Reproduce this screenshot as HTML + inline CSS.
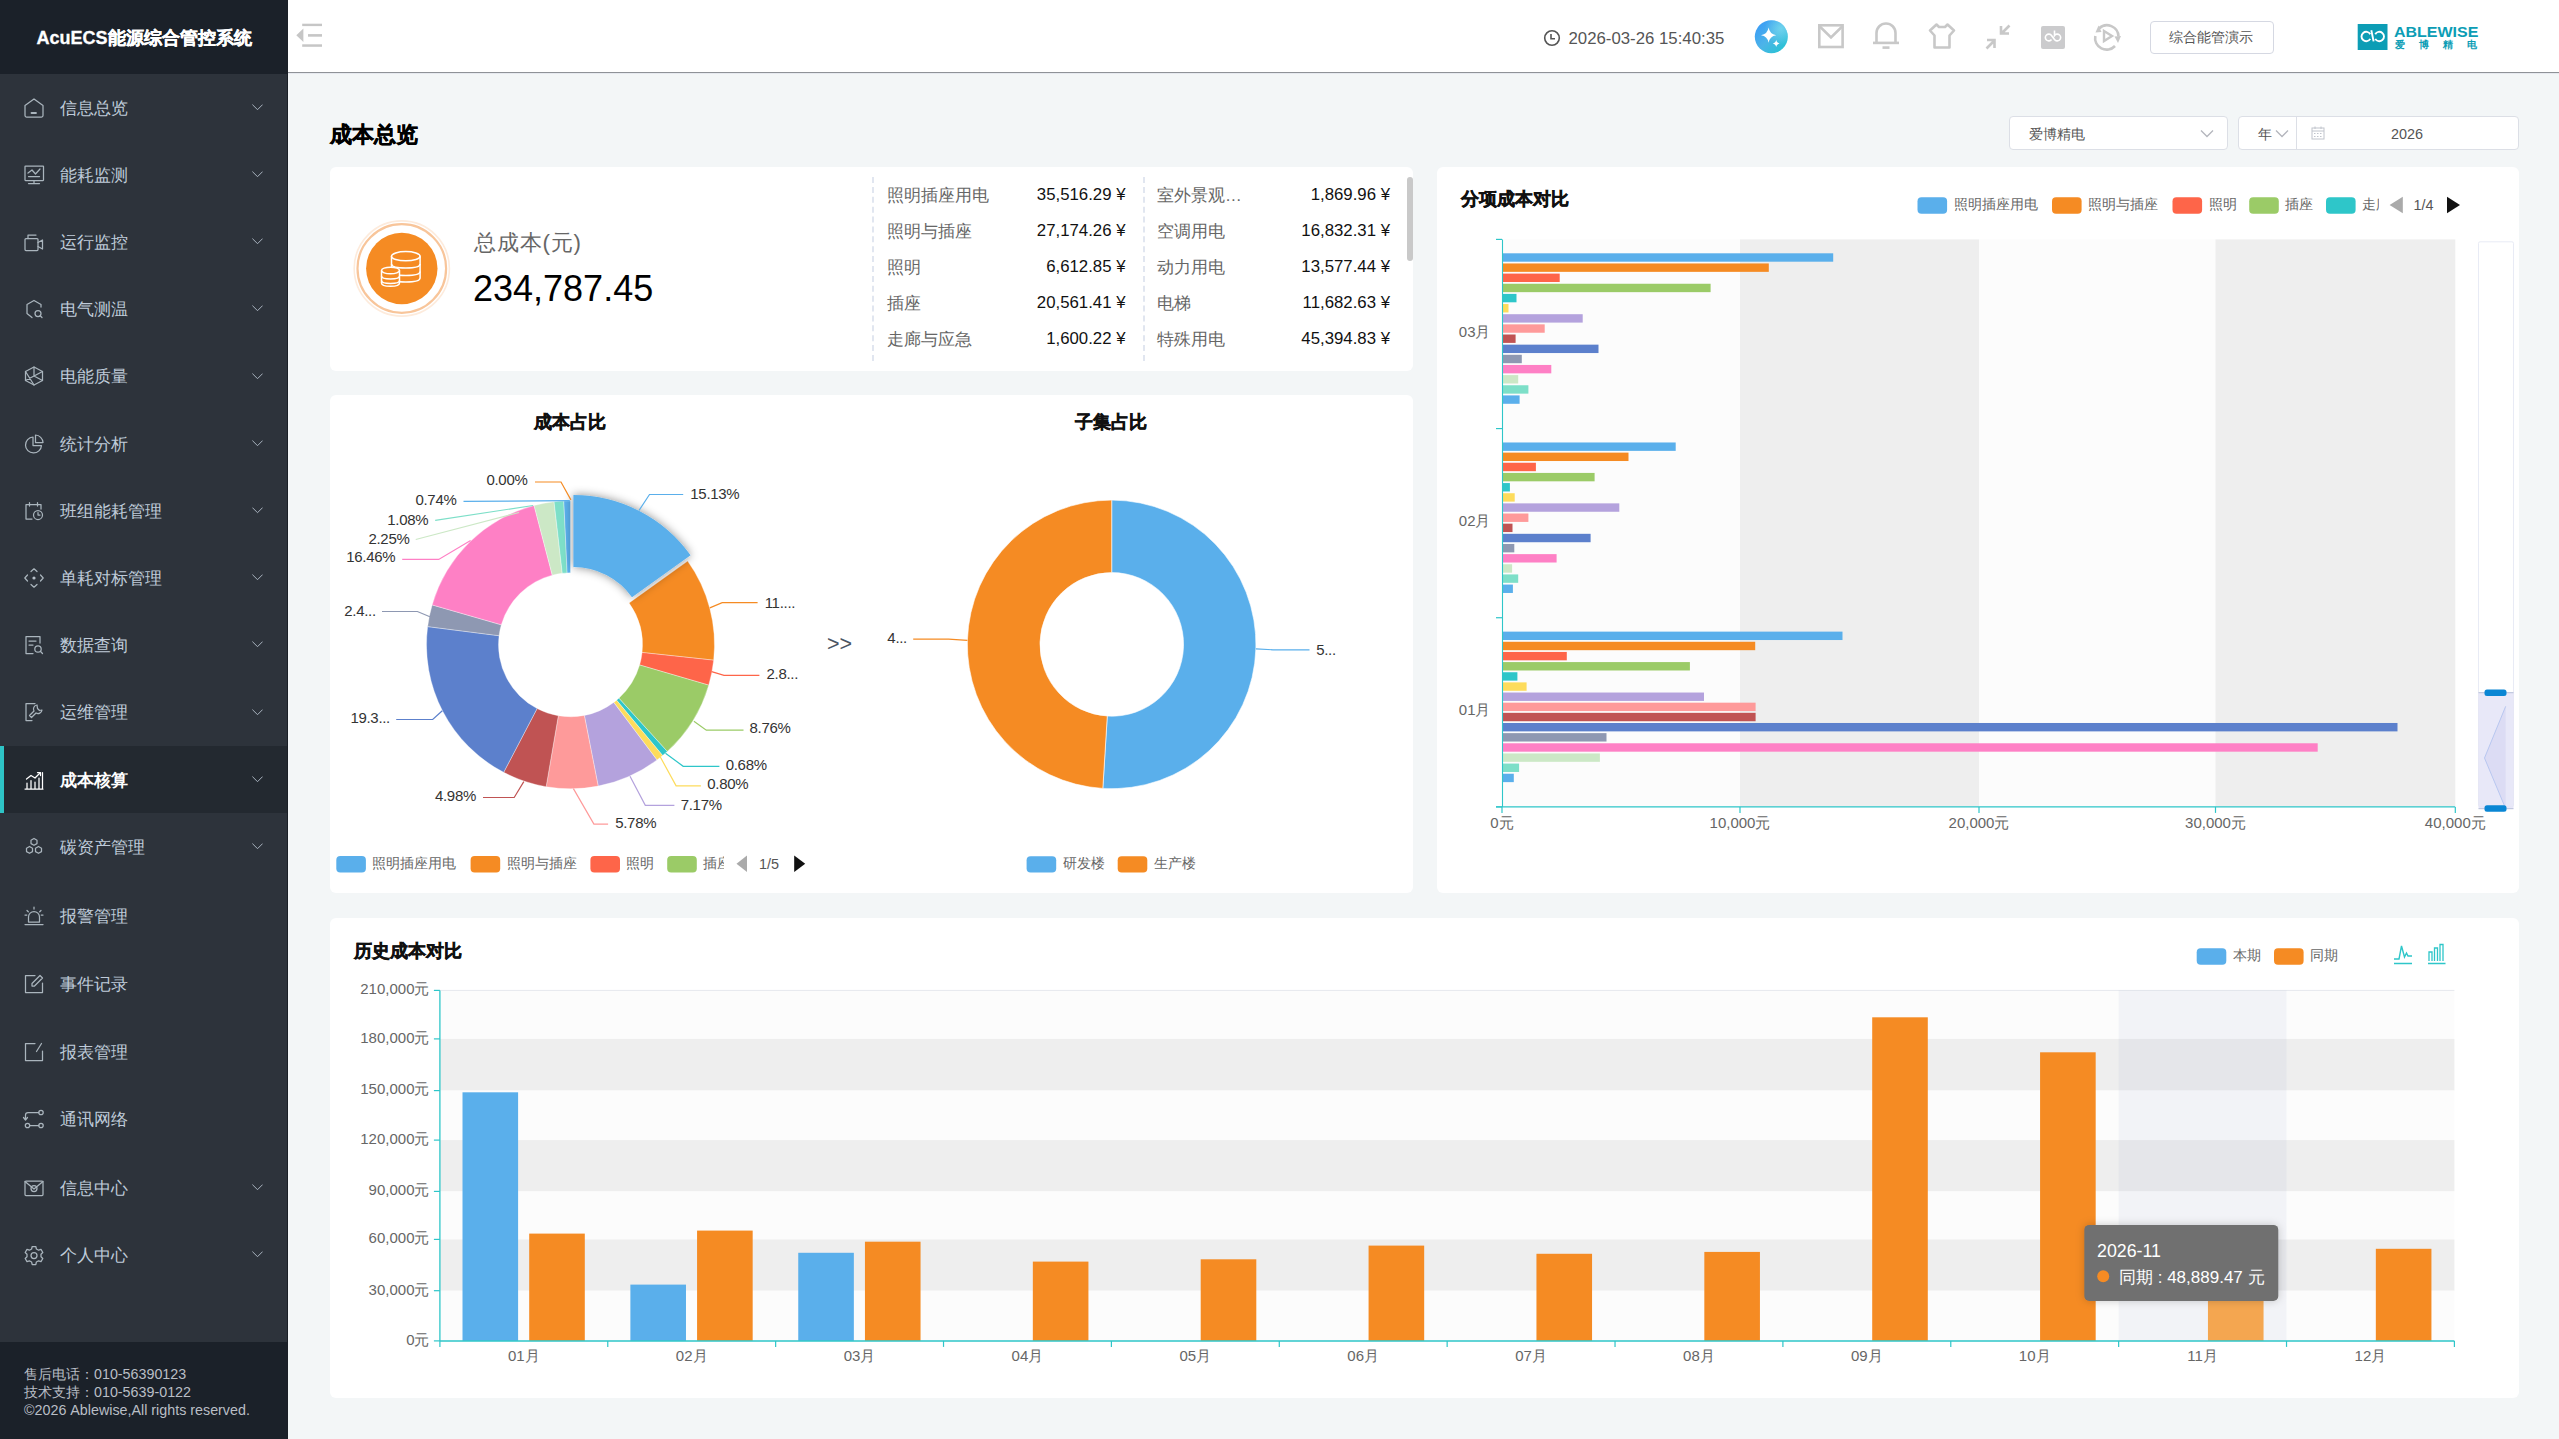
<!DOCTYPE html><html><head><meta charset="utf-8"><title>AcuECS</title><style>
*{box-sizing:border-box;margin:0;padding:0}
html,body{width:2559px;height:1439px;overflow:hidden;background:#f3f6f7;font-family:"Liberation Sans", sans-serif;}
.abs{position:absolute}
.t{position:absolute;white-space:nowrap;line-height:1}
#side{position:absolute;left:0;top:0;width:288px;height:1439px;background:#2d333b}
#logo{position:absolute;left:0;top:0;width:288px;height:74px;background:#1b2129}
#foot{position:absolute;left:0;top:1342px;width:288px;height:97px;background:#1b2129}
#top{position:absolute;left:288px;top:0;width:2271px;height:73px;background:#fff;border-bottom:1px solid #8f9297}
.card{position:absolute;background:#fff;border-radius:6px}
.mi{position:absolute;left:0;width:288px;height:67px}
.mi .tx{position:absolute;left:60px;top:0;line-height:67px;font-size:16.8px;color:#bfcbd9}
.mi .ic{position:absolute;left:24px;top:24px;width:20px;height:20px}
.mi .ch{position:absolute;left:250px;top:29px;width:12px;height:8px}
</style></head><body>
<div id="side"></div><div id="logo"></div><div id="foot"></div><div class="t" style="left:36.5px;top:29px;font-size:18px;font-weight:bold;color:#fff;-webkit-text-stroke:0.3px #fff">AcuECS能源综合管控系统</div><div class="abs" style="left:0;top:746px;width:288px;height:67px;background:#232930"></div><div class="abs" style="left:0;top:746px;width:4px;height:67px;background:#2ec4c6"></div><div class="t" style="left:60px;top:100.5px;font-size:16.8px;color:#bfcbd9;font-weight:normal">信息总览</div><svg class="abs" style="left:24px;top:97.5px;overflow:visible" width="20" height="20" viewBox="0 0 20 20"><g stroke="#aab5bd" stroke-width="1.25" fill="none" stroke-linecap="round" stroke-linejoin="round"><path d="M1 7.5 L10 1 L19 7.5 V17.5 Q19 19 17.5 19 H2.5 Q1 19 1 17.5 Z"/><path d="M7.5 15 H12" stroke-width="1.8"/></g></svg><svg class="abs" style="left:251.5px;top:103.7px" width="11" height="7" viewBox="0 0 11 7"><path d="M0.4 0.6 L5.5 5.7 L10.6 0.6" stroke="#a9b3bf" stroke-width="1" fill="none"/></svg><div class="t" style="left:60px;top:167.7px;font-size:16.8px;color:#bfcbd9;font-weight:normal">能耗监测</div><svg class="abs" style="left:24px;top:164.7px;overflow:visible" width="20" height="20" viewBox="0 0 20 20"><g stroke="#aab5bd" stroke-width="1.25" fill="none" stroke-linecap="round" stroke-linejoin="round"><rect x="1" y="1" width="18.5" height="14.5" rx="0.5"/><path d="M4 8 L8 5 L11.5 9 L16 4"/><path d="M4.5 11.5 H15.5"/><path d="M10 15.5 V18.5 M4.5 18.5 H15.5"/></g></svg><svg class="abs" style="left:251.5px;top:170.9px" width="11" height="7" viewBox="0 0 11 7"><path d="M0.4 0.6 L5.5 5.7 L10.6 0.6" stroke="#a9b3bf" stroke-width="1" fill="none"/></svg><div class="t" style="left:60px;top:234.9px;font-size:16.8px;color:#bfcbd9;font-weight:normal">运行监控</div><svg class="abs" style="left:24px;top:231.9px;overflow:visible" width="20" height="20" viewBox="0 0 20 20"><g stroke="#aab5bd" stroke-width="1.25" fill="none" stroke-linecap="round" stroke-linejoin="round"><rect x="1" y="6.5" width="13" height="12" rx="1"/><path d="M4 6.5 V3 H12"/><path d="M14 10.5 L18.5 8 V17 L14 14.5"/></g></svg><svg class="abs" style="left:251.5px;top:238.1px" width="11" height="7" viewBox="0 0 11 7"><path d="M0.4 0.6 L5.5 5.7 L10.6 0.6" stroke="#a9b3bf" stroke-width="1" fill="none"/></svg><div class="t" style="left:60px;top:302.1px;font-size:16.8px;color:#bfcbd9;font-weight:normal">电气测温</div><svg class="abs" style="left:24px;top:299.1px;overflow:visible" width="20" height="20" viewBox="0 0 20 20"><g stroke="#aab5bd" stroke-width="1.25" fill="none" stroke-linecap="round" stroke-linejoin="round"><path d="M17 8 V5.5 L10 1.5 L3 5.5 V14.5 L8 18.5"/><circle cx="14" cy="14.5" r="3"/><path d="M16.2 16.7 L18 18.5"/></g></svg><svg class="abs" style="left:251.5px;top:305.3px" width="11" height="7" viewBox="0 0 11 7"><path d="M0.4 0.6 L5.5 5.7 L10.6 0.6" stroke="#a9b3bf" stroke-width="1" fill="none"/></svg><div class="t" style="left:60px;top:369.3px;font-size:16.8px;color:#bfcbd9;font-weight:normal">电能质量</div><svg class="abs" style="left:24px;top:366.3px;overflow:visible" width="20" height="20" viewBox="0 0 20 20"><g stroke="#aab5bd" stroke-width="1.25" fill="none" stroke-linecap="round" stroke-linejoin="round"><path d="M10 1 L18.5 5.5 V14.5 L10 19 L1.5 14.5 V5.5 Z"/><path d="M10 1 V10 L18.5 14.5 M10 10 L1.5 14.5 M1.5 5.5 L10 19 M18.5 5.5 L10 10"/></g></svg><svg class="abs" style="left:251.5px;top:372.5px" width="11" height="7" viewBox="0 0 11 7"><path d="M0.4 0.6 L5.5 5.7 L10.6 0.6" stroke="#a9b3bf" stroke-width="1" fill="none"/></svg><div class="t" style="left:60px;top:436.5px;font-size:16.8px;color:#bfcbd9;font-weight:normal">统计分析</div><svg class="abs" style="left:24px;top:433.5px;overflow:visible" width="20" height="20" viewBox="0 0 20 20"><g stroke="#aab5bd" stroke-width="1.25" fill="none" stroke-linecap="round" stroke-linejoin="round"><path d="M9 3 A8 8 0 1 0 17.5 11.5 H9 Z"/><path d="M11.5 1 A8 8 0 0 1 19 8.5 H11.5 Z"/></g></svg><svg class="abs" style="left:251.5px;top:439.7px" width="11" height="7" viewBox="0 0 11 7"><path d="M0.4 0.6 L5.5 5.7 L10.6 0.6" stroke="#a9b3bf" stroke-width="1" fill="none"/></svg><div class="t" style="left:60px;top:503.7px;font-size:16.8px;color:#bfcbd9;font-weight:normal">班组能耗管理</div><svg class="abs" style="left:24px;top:500.7px;overflow:visible" width="20" height="20" viewBox="0 0 20 20"><g stroke="#aab5bd" stroke-width="1.25" fill="none" stroke-linecap="round" stroke-linejoin="round"><path d="M8 18 H2 V3.5 H17 V8"/><path d="M5.5 1.5 V5 M13.5 1.5 V5"/><circle cx="14" cy="14" r="4.5"/><path d="M14 11.5 V14 H16"/></g></svg><svg class="abs" style="left:251.5px;top:506.9px" width="11" height="7" viewBox="0 0 11 7"><path d="M0.4 0.6 L5.5 5.7 L10.6 0.6" stroke="#a9b3bf" stroke-width="1" fill="none"/></svg><div class="t" style="left:60px;top:570.9px;font-size:16.8px;color:#bfcbd9;font-weight:normal">单耗对标管理</div><svg class="abs" style="left:24px;top:567.9px;overflow:visible" width="20" height="20" viewBox="0 0 20 20"><g stroke="#aab5bd" stroke-width="1.25" fill="none" stroke-linecap="round" stroke-linejoin="round"><path d="M7 3.5 L10 0.8 L13 3.5 M16.5 7 L19.2 10 L16.5 13 M13 16.5 L10 19.2 L7 16.5 M3.5 13 L0.8 10 L3.5 7"/><circle cx="10" cy="10" r="1.6" fill="#b6bfc8" stroke="none"/></g></svg><svg class="abs" style="left:251.5px;top:574.1px" width="11" height="7" viewBox="0 0 11 7"><path d="M0.4 0.6 L5.5 5.7 L10.6 0.6" stroke="#a9b3bf" stroke-width="1" fill="none"/></svg><div class="t" style="left:60px;top:638.1px;font-size:16.8px;color:#bfcbd9;font-weight:normal">数据查询</div><svg class="abs" style="left:24px;top:635.1px;overflow:visible" width="20" height="20" viewBox="0 0 20 20"><g stroke="#aab5bd" stroke-width="1.25" fill="none" stroke-linecap="round" stroke-linejoin="round"><path d="M9 18.5 H2 V1.5 H16 V8"/><path d="M5 6 H12 M5 10 H9"/><circle cx="14" cy="14" r="3.2"/><path d="M16.3 16.3 L18.5 18.5"/></g></svg><svg class="abs" style="left:251.5px;top:641.3px" width="11" height="7" viewBox="0 0 11 7"><path d="M0.4 0.6 L5.5 5.7 L10.6 0.6" stroke="#a9b3bf" stroke-width="1" fill="none"/></svg><div class="t" style="left:60px;top:705.3px;font-size:16.8px;color:#bfcbd9;font-weight:normal">运维管理</div><svg class="abs" style="left:24px;top:702.3px;overflow:visible" width="20" height="20" viewBox="0 0 20 20"><g stroke="#aab5bd" stroke-width="1.25" fill="none" stroke-linecap="round" stroke-linejoin="round"><path d="M8 18.5 H2 V1.5 H11"/><path d="M13 3 A4 4 0 0 0 10 9 L5.5 13.5 L7.5 15.5 L12 11 A4 4 0 0 0 18 8 L15.5 8.5 L13.5 6.5 Z"/></g></svg><svg class="abs" style="left:251.5px;top:708.5px" width="11" height="7" viewBox="0 0 11 7"><path d="M0.4 0.6 L5.5 5.7 L10.6 0.6" stroke="#a9b3bf" stroke-width="1" fill="none"/></svg><div class="t" style="left:60px;top:772.8px;font-size:16.8px;color:#ffffff;font-weight:bold">成本核算</div><svg class="abs" style="left:24px;top:769.8px;overflow:visible" width="20" height="20" viewBox="0 0 20 20"><g stroke="#aab5bd" stroke-width="1.25" fill="none" stroke-linecap="round" stroke-linejoin="round"><path d="M1 19 H19 M3 18.5 V13 M7 18.5 V10.5 M11 18.5 V12 M15 18.5 V8 M18.5 18.5 V2.5" stroke="#fff"/><path d="M2.5 9 L7 5.5 L11 8 L16 3" stroke="#fff"/><path d="M13.5 2.5 H16.5 V5.5" stroke="#fff"/></g></svg><svg class="abs" style="left:251.5px;top:776.0px" width="11" height="7" viewBox="0 0 11 7"><path d="M0.4 0.6 L5.5 5.7 L10.6 0.6" stroke="#a9b3bf" stroke-width="1" fill="none"/></svg><div class="t" style="left:60px;top:839.8px;font-size:16.8px;color:#bfcbd9;font-weight:normal">碳资产管理</div><svg class="abs" style="left:24px;top:836.8px;overflow:visible" width="20" height="20" viewBox="0 0 20 20"><g stroke="#aab5bd" stroke-width="1.25" fill="none" stroke-linecap="round" stroke-linejoin="round"><path d="M10 1.5 L13 3.2 V6.6 L10 8.3 L7 6.6 V3.2 Z"/><path d="M5.5 9.5 L8.5 11.2 V14.6 L5.5 16.3 L2.5 14.6 V11.2 Z"/><path d="M14.5 9.5 L17.5 11.2 V14.6 L14.5 16.3 L11.5 14.6 V11.2 Z"/></g></svg><svg class="abs" style="left:251.5px;top:843.0px" width="11" height="7" viewBox="0 0 11 7"><path d="M0.4 0.6 L5.5 5.7 L10.6 0.6" stroke="#a9b3bf" stroke-width="1" fill="none"/></svg><div class="t" style="left:60px;top:909.1px;font-size:16.8px;color:#bfcbd9;font-weight:normal">报警管理</div><svg class="abs" style="left:24px;top:906.1px;overflow:visible" width="20" height="20" viewBox="0 0 20 20"><g stroke="#aab5bd" stroke-width="1.25" fill="none" stroke-linecap="round" stroke-linejoin="round"><path d="M1 18.5 H19"/><path d="M4.5 16 V11 A5.5 5.5 0 0 1 15.5 11 V16 Z"/><path d="M10 1 V3 M3 4.5 L4.3 5.8 M17 4.5 L15.7 5.8 M1 9 H2.8 M17.2 9 H19"/></g></svg><div class="t" style="left:60px;top:976.8px;font-size:16.8px;color:#bfcbd9;font-weight:normal">事件记录</div><svg class="abs" style="left:24px;top:973.8px;overflow:visible" width="20" height="20" viewBox="0 0 20 20"><g stroke="#aab5bd" stroke-width="1.25" fill="none" stroke-linecap="round" stroke-linejoin="round"><path d="M11 1.5 H1.5 V18.5 H18.5 V9"/><path d="M16 1.5 L18.5 4 L10.5 12 H8 V9.5 Z"/></g></svg><div class="t" style="left:60px;top:1044.5px;font-size:16.8px;color:#bfcbd9;font-weight:normal">报表管理</div><svg class="abs" style="left:24px;top:1041.5px;overflow:visible" width="20" height="20" viewBox="0 0 20 20"><g stroke="#aab5bd" stroke-width="1.25" fill="none" stroke-linecap="round" stroke-linejoin="round"><path d="M11 1.5 H1.5 V18.5 H18.5 V9"/><path d="M17.5 1.5 L12.5 9.5"/></g></svg><div class="t" style="left:60px;top:1112.2px;font-size:16.8px;color:#bfcbd9;font-weight:normal">通讯网络</div><svg class="abs" style="left:24px;top:1109.2px;overflow:visible" width="20" height="20" viewBox="0 0 20 20"><g stroke="#aab5bd" stroke-width="1.25" fill="none" stroke-linecap="round" stroke-linejoin="round"><circle cx="17" cy="3.5" r="2.2"/><circle cx="3.5" cy="16.5" r="2.2"/><circle cx="17" cy="16.5" r="2.2"/><path d="M14.8 3.5 H4 Q1.5 3.5 1.5 6 V10 M5.7 16.5 H14.8"/><path d="M-0.5 8.5 L1.5 11 L3.5 8.5"/></g></svg><div class="t" style="left:60px;top:1180.5px;font-size:16.8px;color:#bfcbd9;font-weight:normal">信息中心</div><svg class="abs" style="left:24px;top:1177.5px;overflow:visible" width="20" height="20" viewBox="0 0 20 20"><g stroke="#aab5bd" stroke-width="1.25" fill="none" stroke-linecap="round" stroke-linejoin="round"><rect x="1" y="3" width="18" height="14.5" rx="1"/><path d="M1 3.5 L10 11 L19 3.5"/><circle cx="10" cy="10.5" r="3"/></g></svg><svg class="abs" style="left:251.5px;top:1183.7px" width="11" height="7" viewBox="0 0 11 7"><path d="M0.4 0.6 L5.5 5.7 L10.6 0.6" stroke="#a9b3bf" stroke-width="1" fill="none"/></svg><div class="t" style="left:60px;top:1248.1px;font-size:16.8px;color:#bfcbd9;font-weight:normal">个人中心</div><svg class="abs" style="left:24px;top:1245.1px;overflow:visible" width="20" height="20" viewBox="0 0 20 20"><g stroke="#aab5bd" stroke-width="1.25" fill="none" stroke-linecap="round" stroke-linejoin="round"><path d="M8.2 1.5 H11.8 L12.4 4 L14.6 5.2 L17 4.4 L18.8 7.5 L17 9.3 V11.7 L18.8 13.5 L17 16.6 L14.6 15.8 L12.4 17 L11.8 19.5 H8.2 L7.6 17 L5.4 15.8 L3 16.6 L1.2 13.5 L3 11.7 V9.3 L1.2 7.5 L3 4.4 L5.4 5.2 L7.6 4 Z"/><circle cx="10" cy="10.5" r="3"/></g></svg><svg class="abs" style="left:251.5px;top:1251.3px" width="11" height="7" viewBox="0 0 11 7"><path d="M0.4 0.6 L5.5 5.7 L10.6 0.6" stroke="#a9b3bf" stroke-width="1" fill="none"/></svg><div class="t" style="left:24px;top:1365px;font-size:14.3px;color:#b9bec5;line-height:18px">售后电话：010-56390123<br>技术支持：010-5639-0122<br>©2026 Ablewise,All rights reserved.</div><div class="abs" style="left:287px;top:0;width:1px;height:1439px;background:#1a1f26"></div><div id="top"></div><div class="abs" style="left:288px;top:73px;width:2271px;height:1px;background:#e6e9ef"></div><svg class="abs" style="left:290px;top:15px" width="40" height="40" viewBox="290 15 40 40"><g fill="#c6c6c6"><rect x="302.2" y="23.7" width="19.8" height="2.4"/><rect x="308" y="34.1" width="14" height="2.6"/><rect x="302.2" y="44.3" width="19.8" height="2.5"/><path d="M303.4 28.4 V42 L296.3 35.2 Z"/></g></svg><svg class="abs" style="left:1540px;top:26px" width="24" height="24" viewBox="0 0 24 24"><circle cx="12" cy="12" r="7.3" stroke="#555" stroke-width="1.6" fill="none"/><path d="M11 8 V12.8 H15" stroke="#555" stroke-width="1.6" fill="none"/></svg><div class="t" style="left:1568.5px;top:30.5px;font-size:16.8px;color:#555">2026-03-26 15:40:35</div><svg class="abs" style="left:1754px;top:20px" width="34" height="34" viewBox="0 0 34 34"><defs><linearGradient id="aig" x1="0" y1="0.2" x2="0.8" y2="1"><stop offset="0" stop-color="#3b9cf6"/><stop offset="0.5" stop-color="#4cb4e8"/><stop offset="1" stop-color="#27c4d3"/></linearGradient><radialGradient id="aig2" cx="0.8" cy="0.25" r="0.5"><stop offset="0" stop-color="#7fe0f0" stop-opacity="0.7"/><stop offset="1" stop-color="#7fe0f0" stop-opacity="0"/></radialGradient></defs><circle cx="17.3" cy="16.7" r="16.5" fill="url(#aig)"/><circle cx="17.3" cy="16.7" r="16.5" fill="url(#aig2)"/>
<path d="M14.6 7.6 Q15.6 14.2 22.2 15.2 Q15.6 16.2 14.6 22.8 Q13.6 16.2 7 15.2 Q13.6 14.2 14.6 7.6 Z" fill="#fff"/><path d="M22.2 19.8 Q22.7 22.9 25.7 23.4 Q22.7 23.9 22.2 27 Q21.7 23.9 18.7 23.4 Q21.7 22.9 22.2 19.8 Z" fill="#fff"/></svg><svg class="abs" style="left:1816px;top:22px" width="30" height="28" viewBox="0 0 30 28"><g stroke="#c8c8c8" stroke-width="2.6" fill="none"><rect x="3.3" y="3.3" width="23.3" height="21.7"/><path d="M3.3 4 L15 15.5 L26.7 4"/></g></svg><svg class="abs" style="left:1871px;top:21px" width="30" height="30" viewBox="0 0 30 30"><g stroke="#c8c8c8" stroke-width="2.6" fill="none"><path d="M5.5 21.9 V12 A9.5 9.5 0 0 1 24.5 12 V21.9"/><path d="M2 21.9 H28"/><path d="M11.5 26.6 H18.5"/></g></svg><svg class="abs" style="left:1927px;top:21px" width="30" height="30" viewBox="0 0 30 30"><g stroke="#c8c8c8" stroke-width="2.6" fill="none" stroke-linejoin="round"><path d="M9.5 3.5 L12 6 H18 L20.5 3.5 L27 9.5 L22.5 14.5 V26.5 H7.5 V14.5 L3 9.5 Z"/></g></svg><svg class="abs" style="left:1983px;top:22px" width="30" height="30" viewBox="0 0 30 30"><g stroke="#c8c8c8" stroke-width="2.6" fill="none"><path d="M26.5 3.5 L18.5 11.5 M18 4 V11.5 H26"/><path d="M3.5 26.5 L11.5 18.5 M4 18 H11.5 V26"/></g></svg><svg class="abs" style="left:2041px;top:25.5px" width="24" height="23" viewBox="0 0 24 23"><rect x="0" y="0" width="24" height="23" rx="2" fill="#cbcbcd"/><g stroke="#fff" stroke-width="1.6" fill="none"><path d="M10.5 13.5 A3.4 3.4 0 1 1 10.5 9.5 L13.5 13.5 A3.4 3.4 0 1 0 13.5 9.5 V4.5"/></g></svg><svg class="abs" style="left:2092px;top:22px" width="30" height="30" viewBox="0 0 30 30"><g stroke="#c8c8c8" stroke-width="2.6" fill="none"><path d="M7 6.5 A11.5 11.5 0 0 1 26.5 14.5"/><path d="M23 24 A11.5 11.5 0 0 1 3.3 14"/></g><g fill="#c8c8c8"><path d="M3.5 10.5 L6.5 3.5 L9.5 10 Z"/><path d="M22.5 14.5 L29 14 L26 21 Z"/><path d="M12 9 L20 14 L12 19 Z" fill="none" stroke="#c8c8c8" stroke-width="2.4"/></g></svg><div class="abs" style="left:2150px;top:21px;width:124px;height:33px;border:1px solid #d5d8e2;border-radius:4px;background:#fff"></div><div class="t" style="left:2169px;top:29.5px;font-size:14.4px;color:#555">综合能管演示</div><svg class="abs" style="left:2357px;top:24px" width="130" height="27" viewBox="0 0 130 27"><rect x="0.7" y="0" width="29.8" height="26" fill="#0c9db5"/><g stroke="#fff" stroke-width="1.9" fill="none"><path d="M13.27 10.15 A4.7 4.7 0 1 0 13.27 14.85"/><path d="M18.23 10.15 A4.7 4.7 0 1 1 18.23 14.85"/><path d="M14.3 6.2 L16.6 17.4"/></g></svg><svg class="abs" style="left:2390px;top:20px" width="95" height="32" viewBox="2390 20 95 32"><text x="2394" y="37.1" font-size="15.2" font-weight="bold" fill="#0c9db5" textLength="84.4" lengthAdjust="spacingAndGlyphs" font-family="Liberation Sans, sans-serif">ABLEWISE</text><text x="2394.6" y="48" font-size="10" font-weight="bold" fill="#0c9db5" letter-spacing="14.2" font-family="Liberation Sans, sans-serif">爱博精电</text></svg><div class="t" style="left:330px;top:123.5px;font-size:21.6px;font-weight:bold;color:#000;-webkit-text-stroke:0.45px #000">成本总览</div><div style="position:absolute;background:#fff;border:1px solid #dcdfe6;left:2009px;top:116px;width:219px;height:34px;border-radius:4px"></div><div class="t" style="left:2029px;top:126.5px;font-size:14.4px;color:#555">爱博精电</div><svg class="abs" style="left:2200px;top:129px" width="14" height="9" viewBox="0 0 14 9"><path d="M1 1.5 L7 7.5 L13 1.5" stroke="#b4b6bd" stroke-width="1.3" fill="none"/></svg><div style="position:absolute;background:#fff;border:1px solid #dcdfe6;left:2238px;top:116px;width:281px;height:34px;border-radius:4px"></div><div class="abs" style="left:2296px;top:117px;width:1px;height:32px;background:#dcdfe6"></div><div class="t" style="left:2257.5px;top:126.5px;font-size:14.4px;color:#555">年</div><svg class="abs" style="left:2275px;top:129px" width="14" height="9" viewBox="0 0 14 9"><path d="M1 1.5 L7 7.5 L13 1.5" stroke="#b4b6bd" stroke-width="1.3" fill="none"/></svg><svg class="abs" style="left:2311px;top:126px" width="14" height="14" viewBox="0 0 14 14"><g stroke="#c0c4cc" stroke-width="1" fill="none"><rect x="1" y="2" width="12" height="11"/><path d="M1 5 H13 M4 0.5 V3 M10 0.5 V3"/></g><g fill="#c0c4cc"><rect x="3" y="7" width="1.5" height="1"/><rect x="6" y="7" width="1.5" height="1"/><rect x="9" y="7" width="1.5" height="1"/><rect x="3" y="10" width="1.5" height="1"/><rect x="6" y="10" width="1.5" height="1"/><rect x="9" y="10" width="1.5" height="1"/></g></svg><div class="t" style="left:2391px;top:126.5px;font-size:14.4px;color:#555">2026</div><div class="card" style="left:330px;top:167px;width:1083px;height:204px"></div><div class="card" style="left:330px;top:395px;width:1083px;height:498px"></div><div class="card" style="left:1437px;top:167px;width:1082px;height:726px"></div><div class="card" style="left:330px;top:918px;width:2189px;height:480px"></div><svg class="abs" style="left:350px;top:217px" width="104" height="104" viewBox="350 217 104 104">
<circle cx="401.8" cy="268.5" r="47.6" fill="none" stroke="#fdebdc" stroke-width="1.6"/>
<circle cx="401.8" cy="268.5" r="44.3" fill="none" stroke="#f8c59a" stroke-width="2.2"/>
<circle cx="401.8" cy="268.5" r="35.7" fill="#f58b23"/>
<g stroke="#fff" stroke-width="1.5" fill="none">
<ellipse cx="405.8" cy="256.2" rx="14.3" ry="4.6"/>
<path d="M391.5 256.2 V278 Q391.5 282 405.8 282 Q420.1 282 420.1 278 V256.2"/>
<path d="M391.5 264 Q391.5 268 405.8 268 Q420.1 268 420.1 264"/>
<path d="M391.5 271.5 Q391.5 275.5 405.8 275.5 Q420.1 275.5 420.1 271.5"/>
</g>
<g stroke="#fff" stroke-width="1.5" fill="#f58b23">
<path d="M381 270.5 V282.5 Q381 286 390.5 286 Q400 286 400 282.5 V270.5 Z" stroke="none"/>
<ellipse cx="390.5" cy="270.5" rx="9" ry="3.3"/>
<path d="M381.5 270.5 V283 Q381.5 286.3 390.5 286.3 Q399.5 286.3 399.5 283 V270.5" fill="none"/>
<path d="M381.5 276 Q381.5 279 390.5 279 Q399.5 279 399.5 276" fill="none"/>
<path d="M381.5 280.5 Q381.5 283.5 390.5 283.5 Q399.5 283.5 399.5 280.5" fill="none"/>
</g>
</svg><div class="t" style="left:474px;top:232px;font-size:22.3px;color:#666;letter-spacing:0.8px">总成本(元)</div><div class="t" style="left:473px;top:270.5px;font-size:36px;color:#000">234,787.45</div><div class="abs" style="left:871.5px;top:177px;width:0;height:184px;border-left:2px dashed #e1e6f0"></div><div class="abs" style="left:1142.5px;top:177px;width:0;height:184px;border-left:2px dashed #e1e6f0"></div><div class="t" style="left:887px;top:187.5px;font-size:16.8px;color:#666">照明插座用电</div><div class="t" style="right:1433.5px;top:186.7px;font-size:16.8px;color:#111">35,516.29 ¥</div><div class="t" style="left:887px;top:223.5px;font-size:16.8px;color:#666">照明与插座</div><div class="t" style="right:1433.5px;top:222.7px;font-size:16.8px;color:#111">27,174.26 ¥</div><div class="t" style="left:887px;top:259.5px;font-size:16.8px;color:#666">照明</div><div class="t" style="right:1433.5px;top:258.7px;font-size:16.8px;color:#111">6,612.85 ¥</div><div class="t" style="left:887px;top:295.5px;font-size:16.8px;color:#666">插座</div><div class="t" style="right:1433.5px;top:294.7px;font-size:16.8px;color:#111">20,561.41 ¥</div><div class="t" style="left:887px;top:331.5px;font-size:16.8px;color:#666">走廊与应急</div><div class="t" style="right:1433.5px;top:330.7px;font-size:16.8px;color:#111">1,600.22 ¥</div><div class="t" style="left:1157px;top:187.5px;font-size:16.8px;color:#666">室外景观…</div><div class="t" style="right:1169.0px;top:186.7px;font-size:16.8px;color:#111">1,869.96 ¥</div><div class="t" style="left:1157px;top:223.5px;font-size:16.8px;color:#666">空调用电</div><div class="t" style="right:1169.0px;top:222.7px;font-size:16.8px;color:#111">16,832.31 ¥</div><div class="t" style="left:1157px;top:259.5px;font-size:16.8px;color:#666">动力用电</div><div class="t" style="right:1169.0px;top:258.7px;font-size:16.8px;color:#111">13,577.44 ¥</div><div class="t" style="left:1157px;top:295.5px;font-size:16.8px;color:#666">电梯</div><div class="t" style="right:1169.0px;top:294.7px;font-size:16.8px;color:#111">11,682.63 ¥</div><div class="t" style="left:1157px;top:331.5px;font-size:16.8px;color:#666">特殊用电</div><div class="t" style="right:1169.0px;top:330.7px;font-size:16.8px;color:#111">45,394.83 ¥</div><div class="abs" style="left:1407px;top:177px;width:5.5px;height:84px;border-radius:3px;background:#c9c9c9"></div><svg class="abs" style="left:330px;top:395px" width="1083" height="498" viewBox="330 395 1083 498"><defs><filter id="shd" x="-30%" y="-30%" width="160%" height="160%"><feGaussianBlur in="SourceAlpha" stdDeviation="5"/><feColorMatrix values="0 0 0 0 0  0 0 0 0 0  0 0 0 0 0  0 0 0 0.45 0"/><feMerge><feMergeNode/><feMergeNode in="SourceGraphic"/></feMerge></filter></defs><path d="M687.67 561.09 A144 144 0 0 1 713.68 660.16 L642.09 652.48 A72 72 0 0 0 629.09 602.95 Z" fill="#f58b23" stroke="#fff" stroke-width="0.35" stroke-linejoin="round"/><path d="M713.68 660.16 A144 144 0 0 1 708.74 685.13 L639.62 664.97 A72 72 0 0 0 642.09 652.48 Z" fill="#fe6549" stroke="#fff" stroke-width="0.35" stroke-linejoin="round"/><path d="M708.74 685.13 A144 144 0 0 1 667.25 751.46 L618.87 698.13 A72 72 0 0 0 639.62 664.97 Z" fill="#9bcb67" stroke="#fff" stroke-width="0.35" stroke-linejoin="round"/><path d="M667.25 751.46 A144 144 0 0 1 662.59 755.51 L616.54 700.15 A72 72 0 0 0 618.87 698.13 Z" fill="#2ec6c9" stroke="#fff" stroke-width="0.35" stroke-linejoin="round"/><path d="M662.59 755.51 A144 144 0 0 1 656.94 759.97 L613.72 702.39 A72 72 0 0 0 616.54 700.15 Z" fill="#fddc5c" stroke="#fff" stroke-width="0.35" stroke-linejoin="round"/><path d="M656.94 759.97 A144 144 0 0 1 598.18 786.12 L584.34 715.46 A72 72 0 0 0 613.72 702.39 Z" fill="#b4a2dd" stroke="#fff" stroke-width="0.35" stroke-linejoin="round"/><path d="M598.18 786.12 A144 144 0 0 1 546.14 786.73 L558.32 715.76 A72 72 0 0 0 584.34 715.46 Z" fill="#fe9a9a" stroke="#fff" stroke-width="0.35" stroke-linejoin="round"/><path d="M546.14 786.73 A144 144 0 0 1 503.67 772.35 L537.09 708.58 A72 72 0 0 0 558.32 715.76 Z" fill="#c05353" stroke="#fff" stroke-width="0.35" stroke-linejoin="round"/><path d="M503.67 772.35 A144 144 0 0 1 427.65 626.62 L499.08 635.71 A72 72 0 0 0 537.09 708.58 Z" fill="#5c80cc" stroke="#fff" stroke-width="0.35" stroke-linejoin="round"/><path d="M427.65 626.62 A144 144 0 0 1 432.14 604.89 L501.32 624.84 A72 72 0 0 0 499.08 635.71 Z" fill="#8e98b2" stroke="#fff" stroke-width="0.35" stroke-linejoin="round"/><path d="M432.14 604.89 A144 144 0 0 1 534.08 505.48 L552.29 575.14 A72 72 0 0 0 501.32 624.84 Z" fill="#fe80c5" stroke="#fff" stroke-width="0.35" stroke-linejoin="round"/><path d="M534.08 505.48 A144 144 0 0 1 554.07 501.74 L562.28 573.27 A72 72 0 0 0 552.29 575.14 Z" fill="#cce8c6" stroke="#fff" stroke-width="0.35" stroke-linejoin="round"/><path d="M554.07 501.74 A144 144 0 0 1 563.81 500.96 L567.15 572.88 A72 72 0 0 0 562.28 573.27 Z" fill="#7ddfc8" stroke="#fff" stroke-width="0.35" stroke-linejoin="round"/><path d="M563.81 500.96 A144 144 0 0 1 570.50 500.80 L570.50 572.80 A72 72 0 0 0 567.15 572.88 Z" fill="#5aafeb" stroke="#fff" stroke-width="0.35" stroke-linejoin="round"/><path d="M573.40 495.00 A144 144 0 0 1 690.57 555.29 L631.99 597.15 A72 72 0 0 0 573.40 567.00 Z" fill="#5aafeb" filter="url(#shd)"/><path d="M535 482 L561 482 L570.9 499.9" stroke="#f58b23" stroke-width="1.2" fill="none"/><text x="527.5" y="485.4" font-size="15" letter-spacing="-0.3" fill="#333" text-anchor="end" font-family="Liberation Sans, sans-serif">0.00%</text><path d="M639 510.5 L649.5 494.5 L683.2 494.5" stroke="#5aafeb" stroke-width="1.2" fill="none"/><text x="690.3" y="498.5" font-size="15" letter-spacing="-0.3" fill="#333" text-anchor="start" font-family="Liberation Sans, sans-serif">15.13%</text><path d="M463.5 501.4 L569.8 500.6" stroke="#5aafeb" stroke-width="1.2" fill="none"/><text x="456.5" y="504.9" font-size="15" letter-spacing="-0.3" fill="#333" text-anchor="end" font-family="Liberation Sans, sans-serif">0.74%</text><path d="M435.2 520.4 L533 505.5" stroke="#7ddfc8" stroke-width="1.2" fill="none"/><text x="428.3" y="525" font-size="15" letter-spacing="-0.3" fill="#333" text-anchor="end" font-family="Liberation Sans, sans-serif">1.08%</text><path d="M415.7 539.5 L519 512.5" stroke="#cce8c6" stroke-width="1.2" fill="none"/><text x="409.5" y="543.8" font-size="15" letter-spacing="-0.3" fill="#333" text-anchor="end" font-family="Liberation Sans, sans-serif">2.25%</text><path d="M402.2 559.4 L438.7 559.4 L470.6 540.6" stroke="#fe80c5" stroke-width="1.2" fill="none"/><text x="395.3" y="562.3" font-size="15" letter-spacing="-0.3" fill="#333" text-anchor="end" font-family="Liberation Sans, sans-serif">16.46%</text><path d="M382 611.5 L417.4 611.5 L429.9 616.8" stroke="#8e98b2" stroke-width="1.2" fill="none"/><text x="375.8" y="615.8" font-size="15" letter-spacing="-0.3" fill="#333" text-anchor="end" font-family="Liberation Sans, sans-serif">2.4...</text><path d="M396.2 719.5 L432.7 719.5 L442.3 710.7" stroke="#5c80cc" stroke-width="1.2" fill="none"/><text x="390" y="722.8" font-size="15" letter-spacing="-0.3" fill="#333" text-anchor="end" font-family="Liberation Sans, sans-serif">19.3...</text><path d="M483 797.5 L514.2 797.5 L523.8 781.6" stroke="#c05353" stroke-width="1.2" fill="none"/><text x="476" y="801.4" font-size="15" letter-spacing="-0.3" fill="#333" text-anchor="end" font-family="Liberation Sans, sans-serif">4.98%</text><path d="M608.1 824.1 L593.9 824.1 L573.4 788.6" stroke="#fe9a9a" stroke-width="1.2" fill="none"/><text x="615.2" y="828" font-size="15" letter-spacing="-0.3" fill="#333" text-anchor="start" font-family="Liberation Sans, sans-serif">5.78%</text><path d="M674.4 805.3 L645.3 805.3 L630 776.3" stroke="#b4a2dd" stroke-width="1.2" fill="none"/><text x="680.7" y="809.6" font-size="15" letter-spacing="-0.3" fill="#333" text-anchor="start" font-family="Liberation Sans, sans-serif">7.17%</text><path d="M700.9 785.8 L676.1 785.8 L660.2 756.8" stroke="#fddc5c" stroke-width="1.2" fill="none"/><text x="707.3" y="789" font-size="15" letter-spacing="-0.3" fill="#333" text-anchor="start" font-family="Liberation Sans, sans-serif">0.80%</text><path d="M719.4 766.3 L683.2 766.3 L665.5 753.2" stroke="#2ec6c9" stroke-width="1.2" fill="none"/><text x="725.7" y="769.9" font-size="15" letter-spacing="-0.3" fill="#333" text-anchor="start" font-family="Liberation Sans, sans-serif">0.68%</text><path d="M743.5 730.2 L706.3 730.2 L693.9 721.3" stroke="#9bcb67" stroke-width="1.2" fill="none"/><text x="749.5" y="733.4" font-size="15" letter-spacing="-0.3" fill="#333" text-anchor="start" font-family="Liberation Sans, sans-serif">8.76%</text><path d="M759.4 675.3 L724 675.3 L711.6 671.7" stroke="#fe6549" stroke-width="1.2" fill="none"/><text x="766.5" y="679.2" font-size="15" letter-spacing="-0.3" fill="#333" text-anchor="start" font-family="Liberation Sans, sans-serif">2.8...</text><path d="M757.6 602.6 L722.2 602.6 L709.8 607.9" stroke="#f58b23" stroke-width="1.2" fill="none"/><text x="764.7" y="607.6" font-size="15" letter-spacing="-0.3" fill="#333" text-anchor="start" font-family="Liberation Sans, sans-serif">11....</text><path d="M1111.70 500.10 A144.3 144.3 0 1 1 1102.82 788.43 L1107.28 716.06 A71.8 71.8 0 1 0 1111.70 572.60 Z" fill="#5aafeb" stroke="#fff" stroke-width="0.6"/><path d="M1102.82 788.43 A144.3 144.3 0 0 1 1111.70 500.10 L1111.70 572.60 A71.8 71.8 0 0 0 1107.28 716.06 Z" fill="#f58b23" stroke="#fff" stroke-width="0.6"/><path d="M1256 648.8 L1273 649.8 L1309.5 649.8" stroke="#5aafeb" stroke-width="1.2" fill="none"/><text x="1316.2" y="654.8" font-size="15" letter-spacing="-0.3" fill="#333" font-family="Liberation Sans, sans-serif">5...</text><path d="M913.2 639.2 L948.6 639.2 L967.4 640.3" stroke="#f58b23" stroke-width="1.2" fill="none"/><text x="907" y="643.1" font-size="15" letter-spacing="-0.3" fill="#333" text-anchor="end" font-family="Liberation Sans, sans-serif">4...</text><rect x="336.3" y="856.0999999999999" width="29.6" height="16.4" rx="4" fill="#5aafeb"/><text x="372.3" y="867.5999999999999" font-size="14.4" fill="#666" font-family="Liberation Sans, sans-serif">照明插座用电</text><rect x="470.6" y="856.0999999999999" width="29.6" height="16.4" rx="4" fill="#f58b23"/><text x="506.6" y="867.5999999999999" font-size="14.4" fill="#666" font-family="Liberation Sans, sans-serif">照明与插座</text><rect x="590.4" y="856.0999999999999" width="29.6" height="16.4" rx="4" fill="#fe6549"/><text x="626.4" y="867.5999999999999" font-size="14.4" fill="#666" font-family="Liberation Sans, sans-serif">照明</text><rect x="667.2" y="856.0999999999999" width="29.6" height="16.4" rx="4" fill="#9bcb67"/><text x="703.2" y="867.5999999999999" font-size="14.4" fill="#666" font-family="Liberation Sans, sans-serif">插座</text><rect x="724" y="850" width="11" height="28" fill="#fff"/><path d="M747 855.5 V872 L736.5 863.8 Z" fill="#aaa"/><text x="759" y="869" font-size="14.4" fill="#555" font-family="Liberation Sans, sans-serif">1/5</text><path d="M794.2 855.5 V872 L805.2 863.8 Z" fill="#111"/><rect x="1026.6" y="856.1999999999999" width="29.6" height="16.4" rx="4" fill="#5aafeb"/><text x="1062.6" y="867.6999999999999" font-size="14.4" fill="#666" font-family="Liberation Sans, sans-serif">研发楼</text><rect x="1117.7" y="856.1999999999999" width="29.6" height="16.4" rx="4" fill="#f58b23"/><text x="1153.7" y="867.6999999999999" font-size="14.4" fill="#666" font-family="Liberation Sans, sans-serif">生产楼</text><text x="570.4" y="428.2" font-size="18" font-weight="bold" fill="#111" stroke="#111" stroke-width="0.45" text-anchor="middle" font-family="Liberation Sans, sans-serif">成本占比</text><text x="1111.3" y="428.2" font-size="18" font-weight="bold" fill="#111" stroke="#111" stroke-width="0.45" text-anchor="middle" font-family="Liberation Sans, sans-serif">子集占比</text><text x="827" y="651" font-size="21.5" fill="#4b5563" font-family="Liberation Sans, sans-serif">&gt;&gt;</text></svg><svg class="abs" style="left:1437px;top:167px" width="1082" height="726" viewBox="1437 167 1082 726"><rect x="1502" y="239.4" width="238.00" height="567.50" fill="#fcfcfc"/><rect x="1740" y="239.4" width="239.00" height="567.50" fill="#eeeeee"/><rect x="1979" y="239.4" width="236.50" height="567.50" fill="#fcfcfc"/><rect x="2215.5" y="239.4" width="239.80" height="567.50" fill="#eeeeee"/><rect x="1502" y="253.30" width="331.20" height="8.4" fill="#5aafeb"/><rect x="1502" y="263.45" width="266.80" height="8.4" fill="#f58b23"/><rect x="1502" y="273.60" width="57.70" height="8.4" fill="#fe6549"/><rect x="1502" y="283.75" width="208.60" height="8.4" fill="#9bcb67"/><rect x="1502" y="293.90" width="14.50" height="8.4" fill="#2ec6c9"/><rect x="1502" y="304.05" width="6.50" height="8.4" fill="#fddc5c"/><rect x="1502" y="314.20" width="80.70" height="8.4" fill="#b4a2dd"/><rect x="1502" y="324.35" width="42.70" height="8.4" fill="#fe9a9a"/><rect x="1502" y="334.50" width="13.60" height="8.4" fill="#c05353"/><rect x="1502" y="344.65" width="96.50" height="8.4" fill="#5c80cc"/><rect x="1502" y="354.80" width="19.80" height="8.4" fill="#8e98b2"/><rect x="1502" y="364.95" width="49.30" height="8.4" fill="#fe80c5"/><rect x="1502" y="375.10" width="16.20" height="8.4" fill="#cce8c6"/><rect x="1502" y="385.25" width="26.40" height="8.4" fill="#7ddfc8"/><rect x="1502" y="395.40" width="17.60" height="8.4" fill="#5aafeb"/><rect x="1502" y="442.47" width="173.70" height="8.4" fill="#5aafeb"/><rect x="1502" y="452.62" width="126.50" height="8.4" fill="#f58b23"/><rect x="1502" y="462.77" width="33.90" height="8.4" fill="#fe6549"/><rect x="1502" y="472.92" width="92.60" height="8.4" fill="#9bcb67"/><rect x="1502" y="483.07" width="7.90" height="8.4" fill="#2ec6c9"/><rect x="1502" y="493.22" width="12.70" height="8.4" fill="#fddc5c"/><rect x="1502" y="503.37" width="117.30" height="8.4" fill="#b4a2dd"/><rect x="1502" y="513.52" width="26.40" height="8.4" fill="#fe9a9a"/><rect x="1502" y="523.67" width="10.50" height="8.4" fill="#c05353"/><rect x="1502" y="533.82" width="88.60" height="8.4" fill="#5c80cc"/><rect x="1502" y="543.97" width="12.30" height="8.4" fill="#8e98b2"/><rect x="1502" y="554.12" width="54.60" height="8.4" fill="#fe80c5"/><rect x="1502" y="564.27" width="10.10" height="8.4" fill="#cce8c6"/><rect x="1502" y="574.42" width="16.20" height="8.4" fill="#7ddfc8"/><rect x="1502" y="584.57" width="10.90" height="8.4" fill="#5aafeb"/><rect x="1502" y="631.63" width="340.50" height="8.4" fill="#5aafeb"/><rect x="1502" y="641.78" width="253.20" height="8.4" fill="#f58b23"/><rect x="1502" y="651.93" width="64.80" height="8.4" fill="#fe6549"/><rect x="1502" y="662.08" width="187.90" height="8.4" fill="#9bcb67"/><rect x="1502" y="672.23" width="15.40" height="8.4" fill="#2ec6c9"/><rect x="1502" y="682.38" width="24.60" height="8.4" fill="#fddc5c"/><rect x="1502" y="692.53" width="202.00" height="8.4" fill="#b4a2dd"/><rect x="1502" y="702.68" width="253.60" height="8.4" fill="#fe9a9a"/><rect x="1502" y="712.83" width="253.60" height="8.4" fill="#c05353"/><rect x="1502" y="722.98" width="895.50" height="8.4" fill="#5c80cc"/><rect x="1502" y="733.13" width="104.50" height="8.4" fill="#8e98b2"/><rect x="1502" y="743.28" width="815.70" height="8.4" fill="#fe80c5"/><rect x="1502" y="753.43" width="97.90" height="8.4" fill="#cce8c6"/><rect x="1502" y="763.58" width="17.10" height="8.4" fill="#7ddfc8"/><rect x="1502" y="773.73" width="11.80" height="8.4" fill="#5aafeb"/><path d="M1502.5 239.4 V806.9" stroke="#2ec6c9" stroke-width="1.1" fill="none"/><path d="M1496 239.40 H1502" stroke="#2ec6c9" stroke-width="1.2"/><path d="M1496 428.57 H1502" stroke="#2ec6c9" stroke-width="1.2"/><path d="M1496 617.73 H1502" stroke="#2ec6c9" stroke-width="1.2"/><path d="M1496 806.90 H1502" stroke="#2ec6c9" stroke-width="1.2"/><path d="M1496 806.9 H2455.2" stroke="#2ec6c9" stroke-width="1.3" fill="none"/><path d="M1502.00 806.9 V812.9" stroke="#2ec6c9" stroke-width="1.2"/><text x="1502.00" y="827.8" font-size="15" fill="#666" text-anchor="middle" font-family="Liberation Sans, sans-serif">0元</text><path d="M1740.00 806.9 V812.9" stroke="#2ec6c9" stroke-width="1.2"/><text x="1740.00" y="827.8" font-size="15" fill="#666" text-anchor="middle" font-family="Liberation Sans, sans-serif">10,000元</text><path d="M1979.00 806.9 V812.9" stroke="#2ec6c9" stroke-width="1.2"/><text x="1979.00" y="827.8" font-size="15" fill="#666" text-anchor="middle" font-family="Liberation Sans, sans-serif">20,000元</text><path d="M2215.50 806.9 V812.9" stroke="#2ec6c9" stroke-width="1.2"/><text x="2215.50" y="827.8" font-size="15" fill="#666" text-anchor="middle" font-family="Liberation Sans, sans-serif">30,000元</text><path d="M2455.30 806.9 V812.9" stroke="#2ec6c9" stroke-width="1.2"/><text x="2455.30" y="827.8" font-size="15" fill="#666" text-anchor="middle" font-family="Liberation Sans, sans-serif">40,000元</text><text x="1490.5" y="337.08" font-size="15" fill="#666" text-anchor="end" font-family="Liberation Sans, sans-serif">03月</text><text x="1490.5" y="526.25" font-size="15" fill="#666" text-anchor="end" font-family="Liberation Sans, sans-serif">02月</text><text x="1490.5" y="715.42" font-size="15" fill="#666" text-anchor="end" font-family="Liberation Sans, sans-serif">01月</text><text x="1460.5" y="204.6" font-size="18" font-weight="bold" fill="#111" stroke="#111" stroke-width="0.45" font-family="Liberation Sans, sans-serif">分项成本对比</text><rect x="1917.5" y="197.3" width="29.6" height="16.4" rx="4" fill="#5aafeb"/><text x="1953.5" y="208.8" font-size="14.4" fill="#666" font-family="Liberation Sans, sans-serif">照明插座用电</text><rect x="2052" y="197.3" width="29.6" height="16.4" rx="4" fill="#f58b23"/><text x="2088" y="208.8" font-size="14.4" fill="#666" font-family="Liberation Sans, sans-serif">照明与插座</text><rect x="2172.5" y="197.3" width="29.6" height="16.4" rx="4" fill="#fe6549"/><text x="2208.5" y="208.8" font-size="14.4" fill="#666" font-family="Liberation Sans, sans-serif">照明</text><rect x="2249.2" y="197.3" width="29.6" height="16.4" rx="4" fill="#9bcb67"/><text x="2285.2" y="208.8" font-size="14.4" fill="#666" font-family="Liberation Sans, sans-serif">插座</text><rect x="2326" y="197.3" width="29.6" height="16.4" rx="4" fill="#2ec6c9"/><text x="2362" y="208.8" font-size="14.4" fill="#666" font-family="Liberation Sans, sans-serif">走廊与应急</text><rect x="2379" y="190" width="90" height="30" fill="#fff"/><path d="M2402.8 196.8 V213.3 L2389.6 205 Z" fill="#aaa"/><text x="2413.6" y="210.2" font-size="14.4" fill="#555" font-family="Liberation Sans, sans-serif">1/4</text><path d="M2447 196.8 V213.3 L2460 205 Z" fill="#111"/><rect x="2478.5" y="241.8" width="35" height="565" rx="1.5" fill="none" stroke="#e8ebf5" stroke-width="1"/><rect x="2478.5" y="692.7" width="35" height="116" fill="#e4e4f7" fill-opacity="0.85"/><path d="M2505.7 706.3 L2484.5 758 L2505.7 808.7" stroke="#b8c7f0" stroke-width="1" fill="#dcdcf4"/><path d="M2478.5 692.7 H2513.5 M2478.5 808.7 H2513.5" stroke="#b7bfd9" stroke-width="1"/><rect x="2484.5" y="689.5" width="22" height="6.5" rx="2.5" fill="#0a86d4"/><rect x="2484.5" y="805.3" width="22" height="6.5" rx="2.5" fill="#0a86d4"/></svg><svg class="abs" style="left:330px;top:918px" width="2189" height="480" viewBox="330 918 2189 480"><rect x="439.9" y="990.40" width="2014.50" height="48.50" fill="#fcfcfc"/><rect x="439.9" y="1038.90" width="2014.50" height="51.70" fill="#eeeeee"/><rect x="439.9" y="1090.60" width="2014.50" height="49.50" fill="#fcfcfc"/><rect x="439.9" y="1140.10" width="2014.50" height="51.30" fill="#eeeeee"/><rect x="439.9" y="1191.40" width="2014.50" height="48.00" fill="#fcfcfc"/><rect x="439.9" y="1239.40" width="2014.50" height="51.30" fill="#eeeeee"/><rect x="439.9" y="1290.70" width="2014.50" height="50.20" fill="#fcfcfc"/><path d="M439.9 990.4 H2454.4" stroke="#e6e8ee" stroke-width="1"/><rect x="2118.65" y="990.4" width="167.88" height="350.50" fill="#a0a8d0" fill-opacity="0.1"/><rect x="462.50" y="1092.30" width="55.6" height="248.60" fill="#5aafeb"/><rect x="529.20" y="1233.60" width="55.6" height="107.30" fill="#f58b23"/><rect x="630.38" y="1284.60" width="55.6" height="56.30" fill="#5aafeb"/><rect x="697.07" y="1230.59" width="55.6" height="110.31" fill="#f58b23"/><rect x="798.25" y="1252.79" width="55.6" height="88.11" fill="#5aafeb"/><rect x="864.95" y="1241.69" width="55.6" height="99.21" fill="#f58b23"/><rect x="1032.83" y="1261.60" width="55.6" height="79.30" fill="#f58b23"/><rect x="1200.70" y="1259.30" width="55.6" height="81.60" fill="#f58b23"/><rect x="1368.58" y="1245.60" width="55.6" height="95.30" fill="#f58b23"/><rect x="1536.45" y="1253.79" width="55.6" height="87.11" fill="#f58b23"/><rect x="1704.33" y="1251.91" width="55.6" height="88.99" fill="#f58b23"/><rect x="1872.20" y="1017.31" width="55.6" height="323.59" fill="#f58b23"/><rect x="2040.08" y="1052.30" width="55.6" height="288.60" fill="#f58b23"/><rect x="2207.95" y="1259.30" width="55.6" height="81.60" fill="#f4a650"/><rect x="2375.83" y="1248.80" width="55.6" height="92.10" fill="#f58b23"/><path d="M439.9 990.4 V1340.9" stroke="#2ec6c9" stroke-width="1.3"/><path d="M433.9 990.40 H439.9" stroke="#2ec6c9" stroke-width="1.2"/><text x="429.5" y="994.20" font-size="15" fill="#666" text-anchor="end" font-family="Liberation Sans, sans-serif">210,000元</text><path d="M433.9 1038.90 H439.9" stroke="#2ec6c9" stroke-width="1.2"/><text x="429.5" y="1042.70" font-size="15" fill="#666" text-anchor="end" font-family="Liberation Sans, sans-serif">180,000元</text><path d="M433.9 1090.60 H439.9" stroke="#2ec6c9" stroke-width="1.2"/><text x="429.5" y="1094.40" font-size="15" fill="#666" text-anchor="end" font-family="Liberation Sans, sans-serif">150,000元</text><path d="M433.9 1140.10 H439.9" stroke="#2ec6c9" stroke-width="1.2"/><text x="429.5" y="1143.90" font-size="15" fill="#666" text-anchor="end" font-family="Liberation Sans, sans-serif">120,000元</text><path d="M433.9 1191.40 H439.9" stroke="#2ec6c9" stroke-width="1.2"/><text x="429.5" y="1195.20" font-size="15" fill="#666" text-anchor="end" font-family="Liberation Sans, sans-serif">90,000元</text><path d="M433.9 1239.40 H439.9" stroke="#2ec6c9" stroke-width="1.2"/><text x="429.5" y="1243.20" font-size="15" fill="#666" text-anchor="end" font-family="Liberation Sans, sans-serif">60,000元</text><path d="M433.9 1290.70 H439.9" stroke="#2ec6c9" stroke-width="1.2"/><text x="429.5" y="1294.50" font-size="15" fill="#666" text-anchor="end" font-family="Liberation Sans, sans-serif">30,000元</text><path d="M433.9 1340.90 H439.9" stroke="#2ec6c9" stroke-width="1.2"/><text x="429.5" y="1344.70" font-size="15" fill="#666" text-anchor="end" font-family="Liberation Sans, sans-serif">0元</text><path d="M439.9 1340.9 H2454.4" stroke="#2ec6c9" stroke-width="1.5"/><path d="M439.90 1340.9 V1346.9" stroke="#2ec6c9" stroke-width="1.2"/><path d="M607.77 1340.9 V1346.9" stroke="#2ec6c9" stroke-width="1.2"/><path d="M775.65 1340.9 V1346.9" stroke="#2ec6c9" stroke-width="1.2"/><path d="M943.52 1340.9 V1346.9" stroke="#2ec6c9" stroke-width="1.2"/><path d="M1111.40 1340.9 V1346.9" stroke="#2ec6c9" stroke-width="1.2"/><path d="M1279.28 1340.9 V1346.9" stroke="#2ec6c9" stroke-width="1.2"/><path d="M1447.15 1340.9 V1346.9" stroke="#2ec6c9" stroke-width="1.2"/><path d="M1615.03 1340.9 V1346.9" stroke="#2ec6c9" stroke-width="1.2"/><path d="M1782.90 1340.9 V1346.9" stroke="#2ec6c9" stroke-width="1.2"/><path d="M1950.78 1340.9 V1346.9" stroke="#2ec6c9" stroke-width="1.2"/><path d="M2118.65 1340.9 V1346.9" stroke="#2ec6c9" stroke-width="1.2"/><path d="M2286.53 1340.9 V1346.9" stroke="#2ec6c9" stroke-width="1.2"/><path d="M2454.40 1340.9 V1346.9" stroke="#2ec6c9" stroke-width="1.2"/><text x="523.84" y="1360.6" font-size="15" fill="#666" text-anchor="middle" font-family="Liberation Sans, sans-serif">01月</text><text x="691.71" y="1360.6" font-size="15" fill="#666" text-anchor="middle" font-family="Liberation Sans, sans-serif">02月</text><text x="859.59" y="1360.6" font-size="15" fill="#666" text-anchor="middle" font-family="Liberation Sans, sans-serif">03月</text><text x="1027.46" y="1360.6" font-size="15" fill="#666" text-anchor="middle" font-family="Liberation Sans, sans-serif">04月</text><text x="1195.34" y="1360.6" font-size="15" fill="#666" text-anchor="middle" font-family="Liberation Sans, sans-serif">05月</text><text x="1363.21" y="1360.6" font-size="15" fill="#666" text-anchor="middle" font-family="Liberation Sans, sans-serif">06月</text><text x="1531.09" y="1360.6" font-size="15" fill="#666" text-anchor="middle" font-family="Liberation Sans, sans-serif">07月</text><text x="1698.96" y="1360.6" font-size="15" fill="#666" text-anchor="middle" font-family="Liberation Sans, sans-serif">08月</text><text x="1866.84" y="1360.6" font-size="15" fill="#666" text-anchor="middle" font-family="Liberation Sans, sans-serif">09月</text><text x="2034.71" y="1360.6" font-size="15" fill="#666" text-anchor="middle" font-family="Liberation Sans, sans-serif">10月</text><text x="2202.59" y="1360.6" font-size="15" fill="#666" text-anchor="middle" font-family="Liberation Sans, sans-serif">11月</text><text x="2370.46" y="1360.6" font-size="15" fill="#666" text-anchor="middle" font-family="Liberation Sans, sans-serif">12月</text><text x="353.5" y="957" font-size="18" font-weight="bold" fill="#111" stroke="#111" stroke-width="0.45" font-family="Liberation Sans, sans-serif">历史成本对比</text><rect x="2196.7" y="948.3" width="29.6" height="16.4" rx="4" fill="#5aafeb"/><text x="2232.7" y="959.8" font-size="14.4" fill="#666" font-family="Liberation Sans, sans-serif">本期</text><rect x="2274" y="948.3" width="29.6" height="16.4" rx="4" fill="#f58b23"/><text x="2310" y="959.8" font-size="14.4" fill="#666" font-family="Liberation Sans, sans-serif">同期</text><path d="M2394 959 H2399 L2401.5 946 L2404.5 957 L2406.5 953 L2408 956 H2412 M2394 963.5 H2412" stroke="#2ec6c9" stroke-width="1.4" fill="none"/><path d="M2428 963.5 H2445.5 M2429 961 V952 H2432 V961 M2434.5 961 V948 H2437.5 V961 M2440 961 V944.5 H2443 V961" stroke="#2ec6c9" stroke-width="1.3" fill="none"/><defs><filter id="tsh" x="-20%" y="-30%" width="140%" height="160%"><feGaussianBlur in="SourceAlpha" stdDeviation="4"/><feColorMatrix values="0 0 0 0 0  0 0 0 0 0  0 0 0 0 0  0 0 0 0.2 0"/><feMerge><feMergeNode/><feMergeNode in="SourceGraphic"/></feMerge></filter></defs><rect x="2084.3" y="1224.9" width="194" height="76" rx="5" fill="#6f6f6f" filter="url(#tsh)"/><text x="2097" y="1256.8" font-size="17.8" fill="#fff" font-family="Liberation Sans, sans-serif">2026-11</text><circle cx="2103.2" cy="1276.3" r="6" fill="#f58b23"/><text x="2119" y="1282.6" font-size="17" fill="#fff" font-family="Liberation Sans, sans-serif">同期 : 48,889.47 元</text></svg></body></html>
